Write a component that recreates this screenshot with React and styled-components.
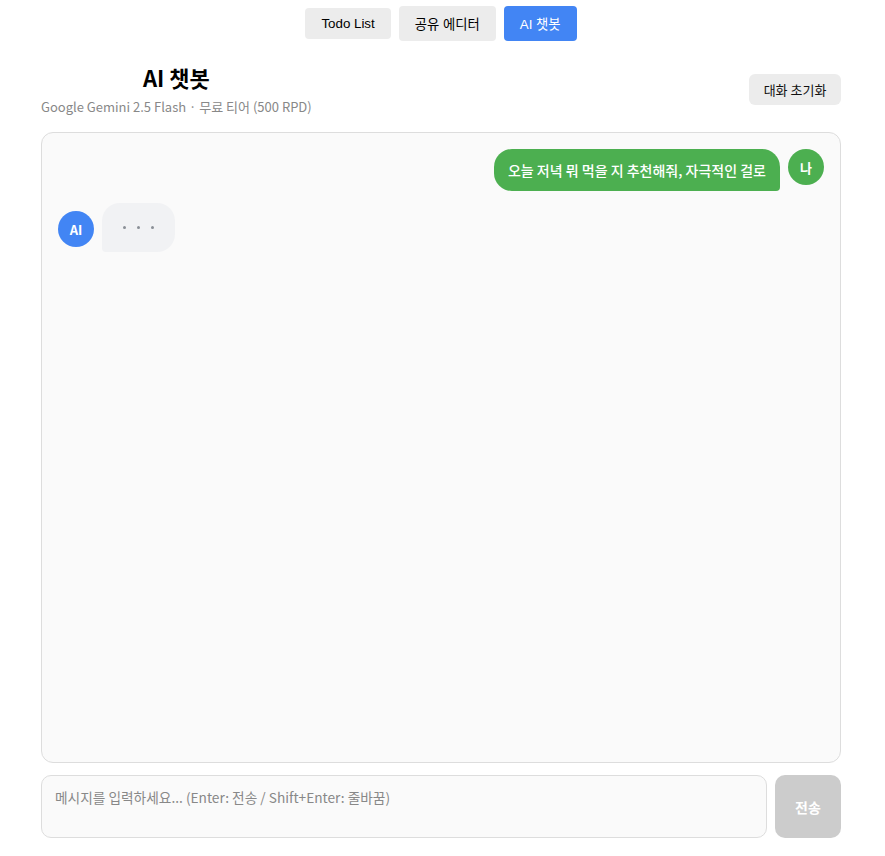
import React, { useState } from "react";
import styled, { createGlobalStyle } from "styled-components";

const GlobalStyle = createGlobalStyle`
  body {
    margin: 0;
    background: #fff;
    font-family: "Noto Sans CJK KR", "Noto Sans", sans-serif;
  }
`;

const Page = styled.div`
  width: 800px;
  margin: 0 auto 0 41px;
  padding-top: 6px;
`;

const Nav = styled.nav`
  display: flex;
  justify-content: center;
  align-items: center;
  gap: 8px;
`;

const NavButton = styled.button`
  border: none;
  border-radius: 4px;
  padding: 8px 16px;
  font-family: "Liberation Sans", "Noto Sans CJK KR", Arial, sans-serif;
  font-size: 13.333px;
  cursor: pointer;
  background: ${(p) => (p.$active ? "#4285f4" : "#ececec")};
  color: ${(p) => (p.$active ? "#fff" : "#000")};
  height: ${(p) => (p.$tall ? "35px" : "31px")};
`;

const Header = styled.header`
  display: flex;
  justify-content: space-between;
  align-items: center;
  margin-top: 20px;
`;

const TitleBlock = styled.div`
  display: flex;
  flex-direction: column;
  align-items: center;
`;

const Title = styled.h2`
  margin: 0;
  font-size: 22px;
  font-weight: 700;
  line-height: 32px;
  color: #000;
`;

const Subtitle = styled.div`
  font-size: 13px;
  color: #888;
  line-height: 20px;
  margin-top: 4px;
`;

const ResetButton = styled.button`
  border: none;
  border-radius: 6px;
  background: #ececec;
  color: #111;
  font-family: "Noto Sans CJK KR", sans-serif;
  font-size: 13px;
  width: 92px;
  height: 31px;
  cursor: pointer;
`;

const ChatBox = styled.div`
  margin-top: 15px;
  height: 597px;
  border: 1px solid #ddd;
  border-radius: 12px;
  background: #fafafa;
  padding: 16px;
  box-sizing: content-box;
  width: 766px;
  display: flex;
  flex-direction: column;
  gap: 12px;
`;

const Row = styled.div`
  display: flex;
  align-items: flex-start;
  gap: 8px;
  justify-content: ${(p) => (p.$mine ? "flex-end" : "flex-start")};
`;

const Avatar = styled.div`
  width: 36px;
  height: 36px;
  border-radius: 50%;
  flex-shrink: 0;
  display: flex;
  align-items: center;
  justify-content: center;
  color: #fff;
  font-size: 13px;
  font-weight: 700;
  background: ${(p) => (p.$ai ? "#4285f4" : "#4caf50")};
  margin-top: ${(p) => (p.$ai ? "8px" : "0")};
`;

const Bubble = styled.div`
  padding: 10px 14px;
  font-size: 14px;
  line-height: 22px;
  font-weight: 500;
  color: #fff;
  background: #4caf50;
  border-radius: 18px 18px 4px 18px;
`;

const TypingBubble = styled.div`
  width: 73px;
  height: 49px;
  box-sizing: border-box;
  background: #f1f2f4;
  border-radius: 18px 18px 18px 4px;
  display: flex;
  align-items: center;
  justify-content: center;
  gap: 11px;
`;

const Dot = styled.span`
  width: 3px;
  height: 3px;
  border-radius: 50%;
  background: #8a8f96;
`;

const InputRow = styled.div`
  display: flex;
  gap: 8px;
  margin-top: 12px;
`;

const TextArea = styled.textarea`
  flex: 1;
  height: 63px;
  box-sizing: border-box;
  resize: none;
  border: 1px solid #ddd;
  border-radius: 10px;
  background: #fafafa;
  padding: 11px 13px;
  font-family: "Noto Sans CJK KR", "Noto Sans", sans-serif;
  font-size: 13.7px;
  line-height: 20px;
  outline: none;
  &::placeholder {
    color: #888;
  }
`;

const SendButton = styled.button`
  width: 66px;
  height: 63px;
  border: none;
  border-radius: 10px;
  background: #ccc;
  color: #fff;
  font-family: "Noto Sans CJK KR", sans-serif;
  font-size: 14px;
  font-weight: 700;
`;

const App = () => {
  const [text, setText] = useState("");
  return (
    <Page>
      <GlobalStyle />
      <Nav>
        <NavButton>Todo List</NavButton>
        <NavButton $tall>공유 에디터</NavButton>
        <NavButton $tall $active>
          AI 챗봇
        </NavButton>
      </Nav>
      <Header>
        <TitleBlock>
          <Title>AI 챗봇</Title>
          <Subtitle>Google Gemini 2.5 Flash · 무료 티어 (500 RPD)</Subtitle>
        </TitleBlock>
        <ResetButton>대화 초기화</ResetButton>
      </Header>
      <ChatBox>
        <Row $mine>
          <Bubble>오늘 저녁 뭐 먹을 지 추천해줘, 자극적인 걸로</Bubble>
          <Avatar>나</Avatar>
        </Row>
        <Row>
          <Avatar $ai>AI</Avatar>
          <TypingBubble>
            <Dot />
            <Dot />
            <Dot />
          </TypingBubble>
        </Row>
      </ChatBox>
      <InputRow>
        <TextArea
          value={text}
          onChange={(e) => setText(e.target.value)}
          placeholder="메시지를 입력하세요... (Enter: 전송 / Shift+Enter: 줄바꿈)"
        />
        <SendButton disabled>전송</SendButton>
      </InputRow>
    </Page>
  );
};

export default App;
